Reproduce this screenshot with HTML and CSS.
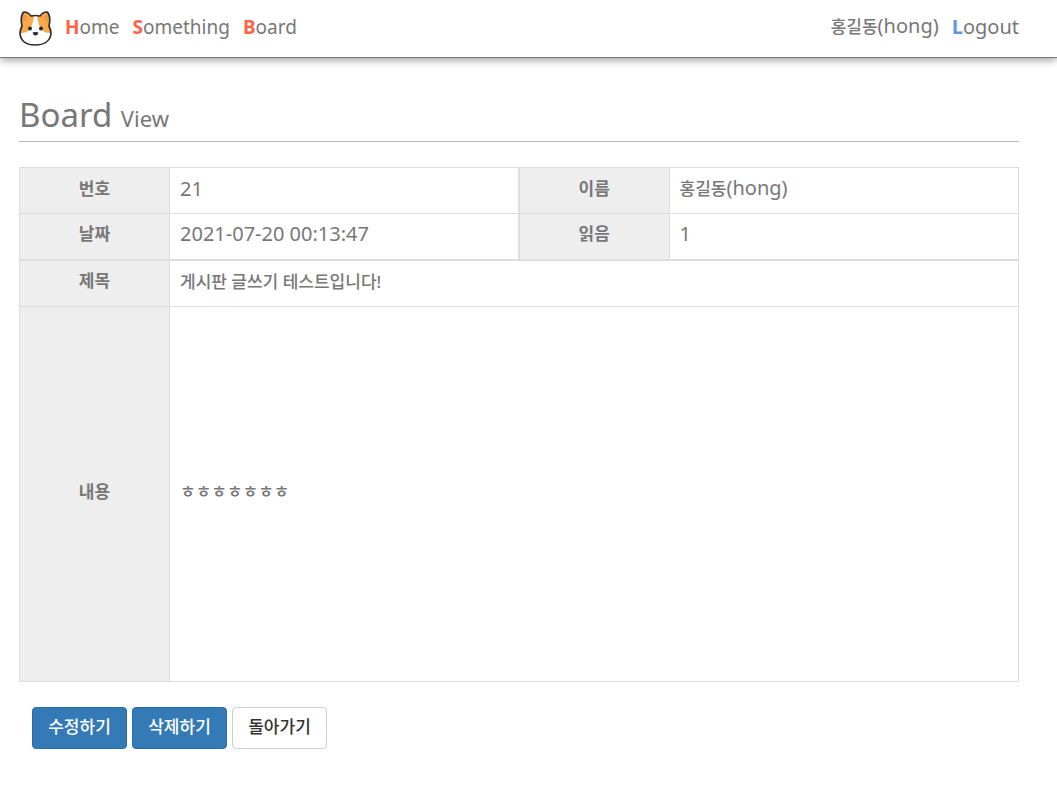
FILE: index.html
```html
<!DOCTYPE html>
<html lang="ko">
<head>
    <meta charset="UTF-8">
    <meta name="viewport" content="width=device-width, initial-scale=1.0">
    <title>Board View</title>
    <link rel="stylesheet" href="styles.css">
</head>
<body>
    <header class="header">
        <nav class="menu">
            <a href="#" class="logo" aria-label="Main">
                <svg width="33" height="36" viewBox="0 0 33 36">
                    <path d="M3 16C1 9 3 3 5 2Q9 2 12 6Q16 5 21 6Q24 2 28 2C30 3 32 9 30 16Q32 20 32 24C31 31 25 35 16 35S2 31 1 24Q1 20 3 16Z" fill="#fff"/>
                    <path d="M3 16C1 9 3 3 5 2Q9 2 12 6H15Q14 14 11 19Q8 23 2 23Q1 20 3 16Z" fill="#fba94c"/>
                    <path d="M30 16C32 9 30 3 28 2Q24 2 21 6H18Q19 14 22 19Q25 23 31 23Q32 20 30 16Z" fill="#fba94c"/>
                    <path d="M4 13Q3 6 5 4Q8 5 9 8Z" fill="#f39a40"/>
                    <path d="M29 13Q30 6 28 4Q25 5 24 8Z" fill="#f39a40"/>
                    <path d="M3 16C1 9 3 3 5 2Q9 2 12 6Q16 5 21 6Q24 2 28 2C30 3 32 9 30 16Q32 20 32 24C31 31 25 35 16 35S2 31 1 24Q1 20 3 16Z" fill="none" stroke="#2b2e30" stroke-width="1.700" stroke-linejoin="round"/>
                    <circle cx="11" cy="18.500" r="2" fill="#25282b"/>
                    <circle cx="22" cy="18.500" r="2" fill="#25282b"/>
                    <path d="M13.500 22.500Q16.500 21.500 19.500 22.500Q19 25 16.500 25.500Q14 25 13.500 22.500Z" fill="#25282b"/>
                </svg>
            </a>
            <a href="#"><b>H</b>ome</a>
            <a href="#"><b>S</b>omething</a>
            <a href="#"><b>B</b>oard</a>
        </nav>
        <div class="menu auth">
            <a href="#"><span class="ko">홍길동</span>(hong)</a>
            <a href="#"><b>L</b>ogout</a>
        </div>
    </header>

    <main class="main">
        <h1>Board <small>View</small></h1>

        <table class="view">
            <colgroup>
                <col class="label">
                <col>
                <col class="label">
                <col>
            </colgroup>
            <tbody>
                <tr>
                    <th scope="row">번호</th>
                    <td>21</td>
                    <th scope="row" class="second">이름</th>
                    <td><span class="ko">홍길동</span>(hong)</td>
                </tr>
                <tr>
                    <th scope="row">날짜</th>
                    <td>2021-07-20 00:13:47</td>
                    <th scope="row" class="second">읽음</th>
                    <td>1</td>
                </tr>
                <tr class="subject">
                    <th scope="row">제목</th>
                    <td colspan="3"><span class="ko">게시판 글쓰기 테스트입니다!</span></td>
                </tr>
                <tr class="content">
                    <th scope="row">내용</th>
                    <td colspan="3"><span class="ko">ㅎㅎㅎㅎㅎㅎㅎ</span></td>
                </tr>
            </tbody>
        </table>

        <div class="buttons">
            <button type="button" class="btn primary">수정하기</button>
            <button type="button" class="btn primary">삭제하기</button>
            <button type="button" class="btn">돌아가기</button>
        </div>
    </main>
</body>
</html>
```
FILE: styles.css
```css
* {
    box-sizing: border-box;
}

body {
    margin: 0;
    font-family: "Noto Sans", "Noto Sans CJK KR", sans-serif;
    font-size: 20px;
    line-height: 28px;
    color: #777;
    background-color: #fff;
}

a {
    color: inherit;
    text-decoration: none;
}

.ko {
    font-size: 17px;
    font-weight: 500;
}

.header {
    display: flex;
    justify-content: space-between;
    align-items: center;
    height: 58px;
    padding: 0 38px 2px 19px;
    border-bottom: 1px solid #777;
    box-shadow: 0 2px 8px rgba(0, 0, 0, 0.4);
}

.menu {
    display: flex;
    align-items: center;
    gap: 13px;
    font-size: 19px;
}

.menu a {
    padding-bottom: 2px;
}

.menu b {
    color: tomato;
}

.menu .logo {
    padding-bottom: 0;
}

.logo svg {
    display: block;
}

.auth {
    font-size: 20px;
}

.auth b {
    color: cornflowerblue;
}

.main {
    padding: 35px 38px 0 19px;
}

h1 {
    margin: 0 0 25px;
    padding-bottom: 4px;
    border-bottom: 1px solid #bbb;
    font-size: 33px;
    font-weight: 400;
    line-height: 44px;
}

h1 small {
    font-size: 22px;
    line-height: 22px;
}

.view {
    width: 100%;
    table-layout: fixed;
    border-collapse: collapse;
}

.view .label {
    width: 150px;
}

.view th,
.view td {
    height: 46px;
    padding: 6px 10px 10px;
    border: 1px solid #ddd;
}

.view th {
    background-color: #eee;
    font-size: 17px;
    text-align: center;
}

.view td {
    text-align: left;
}

.view .second {
    border-left-width: 2px;
}

.view .subject th,
.view .subject td {
    border-top-width: 2px;
}

.view .content th,
.view .content td {
    height: 375px;
}

.buttons {
    display: flex;
    gap: 5px;
    padding: 25px 13px;
}

.btn {
    min-width: 95px;
    height: 42px;
    padding: 0 15px 4px;
    border: 1px solid #ccc;
    border-radius: 4px;
    background-color: #fff;
    color: #333;
    font-family: inherit;
    font-size: 17px;
    font-weight: 500;
}

.btn.primary {
    border-color: #2e6da4;
    background-color: #337ab7;
    color: #fff;
}
```
